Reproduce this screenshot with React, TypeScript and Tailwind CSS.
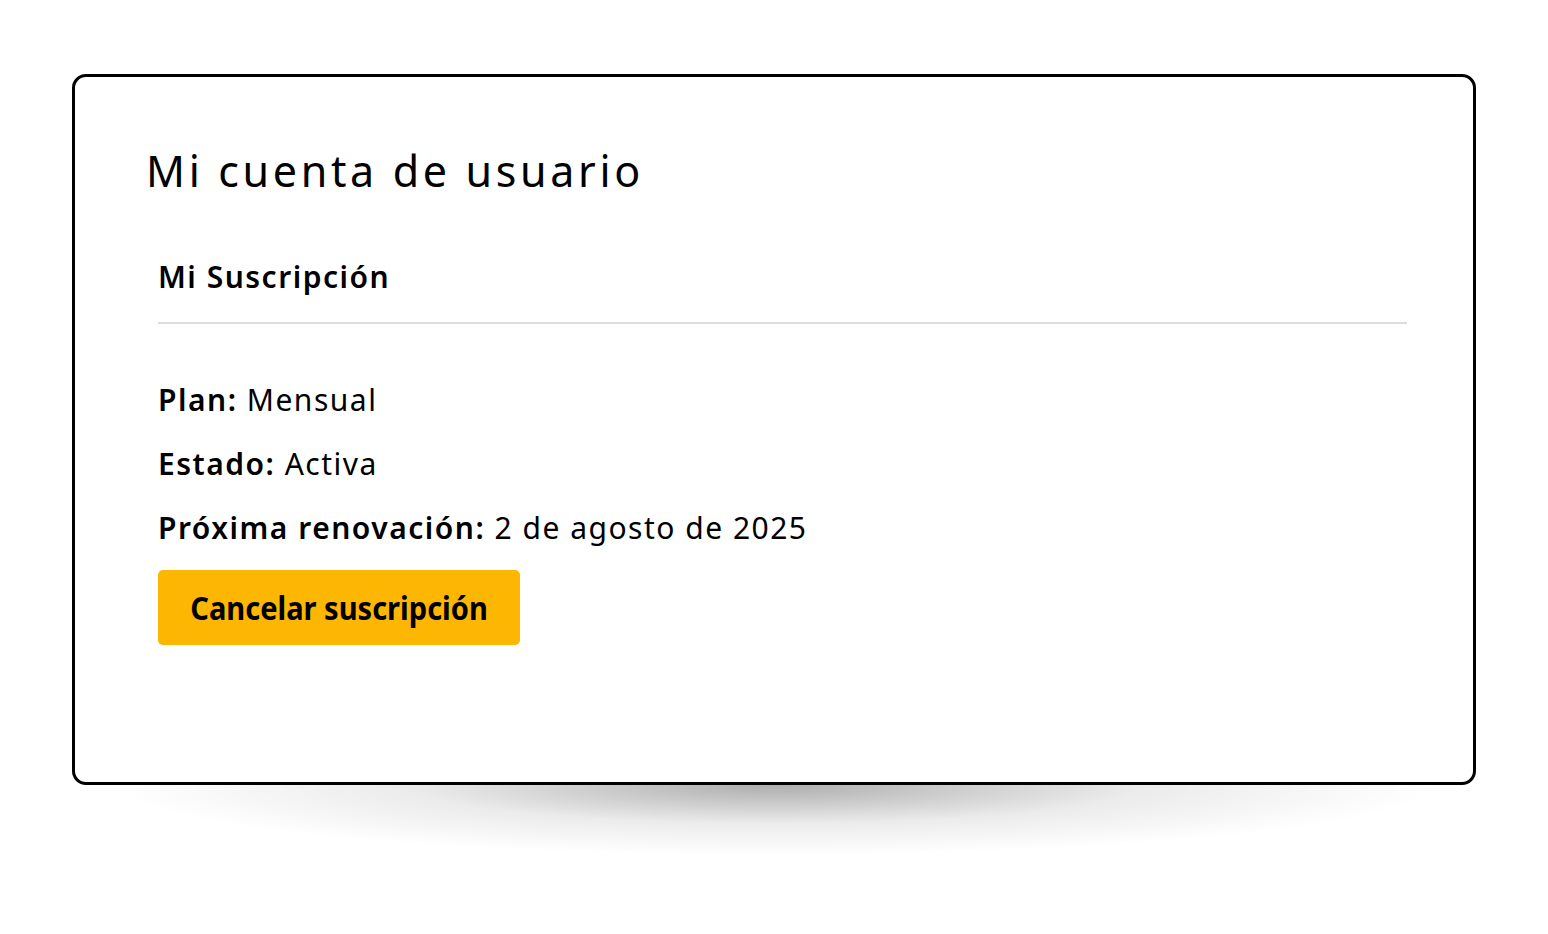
const rows = [
    { label: 'Plan:', value: 'Mensual' },
    { label: 'Estado:', value: 'Activa' },
    { label: 'Próxima renovación:', value: '2 de agosto de 2025' },
]

const SubscriptionRow = ({ label, value }: { label: string; value: string }) => (
    <p className="text-[30px] leading-[64px] tracking-[0.05em] text-black">
        <span className="font-semibold">{label}</span> {value}
    </p>
)

export default function App() {
    return (
        <div className="min-h-screen bg-white pt-[74px] px-[72px] font-['Noto_Sans','Open_Sans',sans-serif]">
            <div className="rounded-[14px] border-[3px] border-black bg-white h-[711px] pl-[71px] pr-[66px] pt-[62px]">
                <h1 className="text-[43px] leading-[64px] tracking-[0.085em] font-normal text-black">
                    Mi cuenta de usuario
                </h1>
                <section className="ml-[12px] mt-[50px]">
                    <h2 className="text-[30px] leading-[48px] tracking-[0.05em] font-semibold text-black pb-[21px] border-b-2 border-[#dcdcdc]">
                        Mi Suscripción
                    </h2>
                    <div className="mt-[44px]">
                        {rows.map(row => (
                            <SubscriptionRow key={row.label} {...row} />
                        ))}
                    </div>
                    <button className="mt-[10px] h-[75px] w-[362px] rounded-[5px] bg-[#fdb702] text-[33px] font-bold text-black">
                        <span className="inline-block scale-x-[0.88]">Cancelar suscripción</span>
                    </button>
                </section>
            </div>
            <div className="h-[70px] mx-[40px] bg-[radial-gradient(ellipse_50%_100%_at_50%_0%,rgba(0,0,0,0.32),rgba(0,0,0,0.08)_55%,transparent)]" />
        </div>
    )
}
